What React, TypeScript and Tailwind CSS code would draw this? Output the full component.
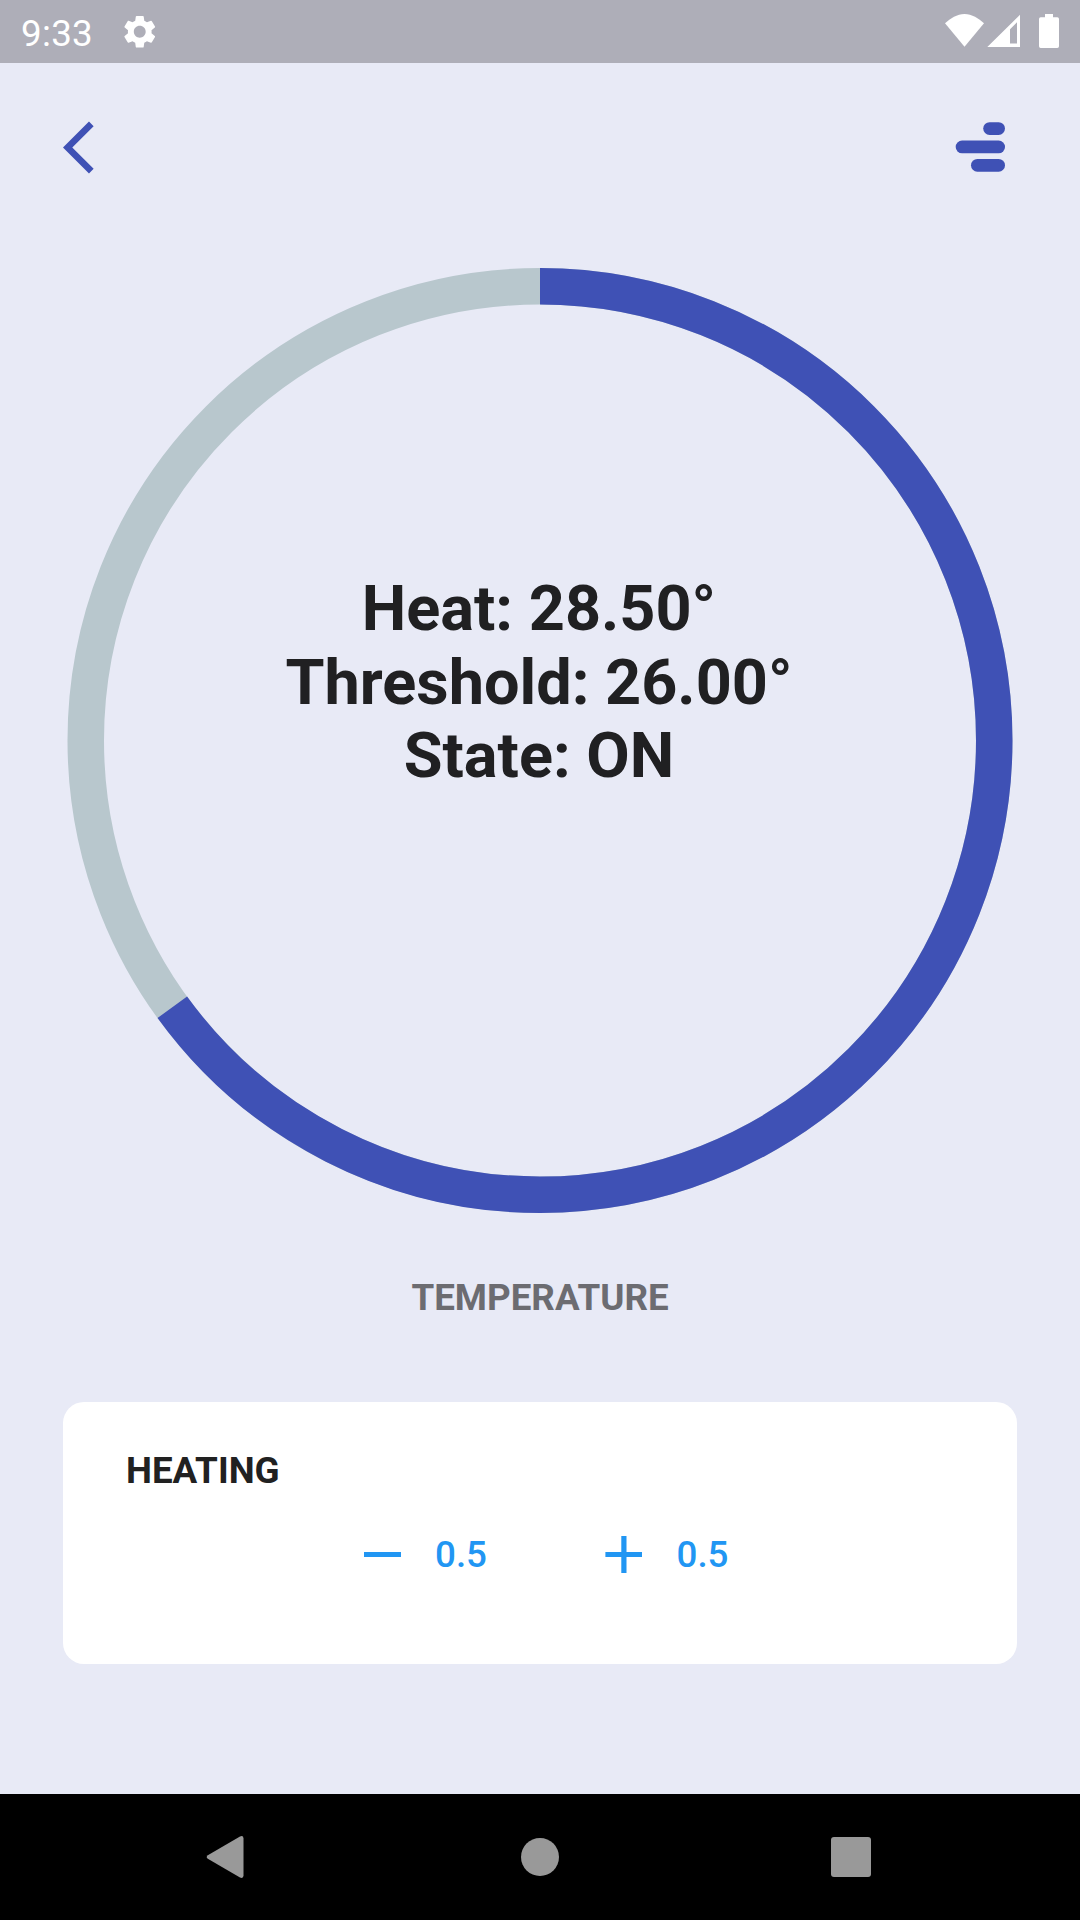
import React from "react";
import { MdSettings } from "react-icons/md";

const RADIUS = 454.25;
const CIRCUMFERENCE = 2 * Math.PI * RADIUS;

function StatusBar() {
  return (
    <header className="flex h-[63px] items-start justify-between bg-[#aeaeb8] text-white">
      <div className="flex items-start pl-[21px]">
        <span className="mt-[12px] w-[72px] text-[36.75px] leading-[43px] tracking-[0.3px]">9:33</span>
        <MdSettings className="mt-[12px] ml-[27px] size-[39.5px]" />
      </div>
      <svg className="mt-[10px] mr-[18px] h-[40px] w-[122px]" viewBox="940 10 122 40" fill="currentColor">
        <path d="M964.5 46.7 945 23.3C950.5 18.5 957 14 964.5 14S978.5 18.5 984 23.3Z" />
        <path fillRule="evenodd" d="M1020 14.7V47H987.3ZM1017 22.2 1010 29.2V43.5H1017Z" />
        <path d="M1045 14h8v3.3h4.3q1.7 0 1.7 1.7v27.2q0 1.7-1.7 1.7h-16.6q-1.7 0-1.7-1.7V19q0-1.7 1.7-1.7h4.3Z" />
      </svg>
    </header>
  );
}

function TopBar() {
  return (
    <div className="flex h-[168px] items-start justify-between pr-[75px] pl-[63px] text-[#3f51b5]">
      <button aria-label="Back" className="mt-[52.5px]">
        <svg className="size-[63px]" viewBox="0 0 24 24" fill="currentColor">
          <path d="M11.67 3.87 9.9 2.1 0 12l9.9 9.9 1.77-1.77L3.54 12z" />
        </svg>
      </button>
      <button aria-label="Menu" className="mt-[59px]">
        <svg className="h-[50px] w-[50px]" viewBox="0 0 50 50" fill="currentColor">
          <rect x="28.2" y="0.2" width="21.8" height="12.7" rx="6.35" />
          <rect x="0.7" y="18.6" width="49.3" height="12.7" rx="6.35" />
          <rect x="16" y="37" width="34" height="12.7" rx="6.35" />
        </svg>
      </button>
    </div>
  );
}

function Gauge() {
  return (
    <section className="relative mx-auto mt-[37px] h-[945px] w-[946px]">
      <svg className="size-full" viewBox="0 0 946 945" fill="none" strokeWidth="36.5">
        <circle cx="473" cy="472.5" r={RADIUS} stroke="#b8c7cd" />
        <circle
          cx="473"
          cy="472.5"
          r={RADIUS}
          stroke="#3f51b5"
          strokeDasharray={`${CIRCUMFERENCE * 0.65} ${CIRCUMFERENCE}`}
          transform="rotate(-90 473 472.5)"
        />
      </svg>
      <div className="absolute inset-x-0 top-[304px] pr-[2px] text-center text-[63px] leading-[74px] font-bold text-[#202022]">
        <p>Heat: 28.50°</p>
        <p>Threshold: 26.00°</p>
        <p className="-mt-px">State: ON</p>
      </div>
    </section>
  );
}

function HeatingCard() {
  return (
    <section className="mx-[63px] h-[262px] rounded-[21px] bg-white">
      <h2 className="pt-[47px] pl-[63px] text-[36.75px] leading-[43px] font-bold text-[#212121]">HEATING</h2>
      <div className="mt-[41px] flex h-[43px] items-center pl-[301px] text-[36.75px] leading-[43px] font-medium text-[#2196f3]">
        <button className="flex w-[241px] items-center gap-[34px]">
          <svg className="size-[37px]" viewBox="0 0 37 37" fill="currentColor">
            <path d="M0 15.9h37v5.2H0z" />
          </svg>
          <span>0.5</span>
        </button>
        <button className="flex items-center gap-[34.5px]">
          <svg className="size-[37px]" viewBox="0 0 37 37" fill="currentColor">
            <path d="M.4 15.9h15.900V0h5.200v15.900H37v5.200H21.500V37h-5.200V21.100H.4z" />
          </svg>
          <span>0.5</span>
        </button>
      </div>
    </section>
  );
}

function NavigationBar() {
  return (
    <nav className="mt-auto flex h-[126px] items-center bg-black text-[#999999]">
      <svg className="ml-[206px] h-[42px] w-[38px]" viewBox="0 0 38 42" fill="currentColor">
        <path d="M1.8 19.2 34 .4Q37.5-.8 37.5 2.500V39.500Q37.500 42.800 34 41.600L1.800 22.800Q-.4 21 1.800 19.200Z" />
      </svg>
      <span className="-mt-px ml-[277px] size-[38px] rounded-full bg-[#999999]" />
      <span className="-mt-px ml-[272px] size-[40px] rounded-[3px] bg-[#999999]" />
    </nav>
  );
}

export default function App() {
  return (
    <main className="flex h-[1920px] w-[1080px] flex-col overflow-hidden bg-[#e8eaf6] font-['Roboto',sans-serif]">
      <StatusBar />
      <TopBar />
      <Gauge />
      <h1 className="mt-[63px] mb-[83px] text-center text-[36.75px] leading-[43px] font-bold text-[#6c6c71]">
        TEMPERATURE
      </h1>
      <HeatingCard />
      <NavigationBar />
    </main>
  );
}
